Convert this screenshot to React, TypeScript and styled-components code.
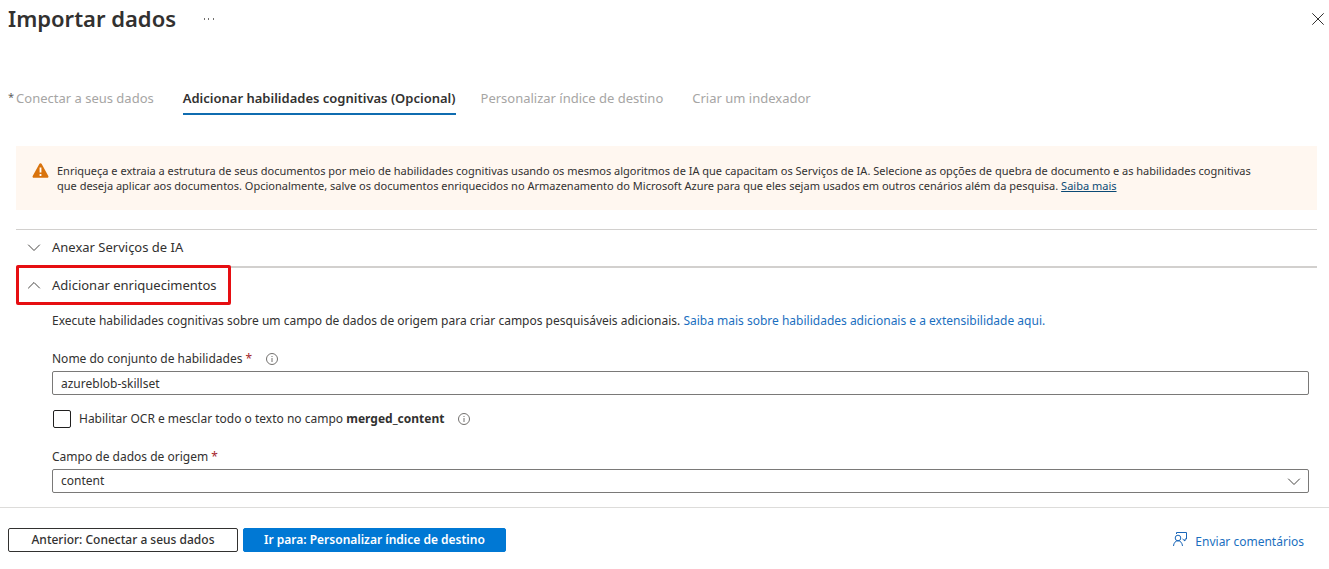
import React, { useState } from "react";
import styled, { createGlobalStyle } from "styled-components";

const GlobalStyle = createGlobalStyle`
  *, *::before, *::after { box-sizing: border-box; }
  body {
    margin: 0;
    background: #fff;
    color: #323130;
    font-family: "Segoe UI", "Noto Sans", sans-serif;
    font-size: 12px;
    line-height: 16px;
  }
  button, input, select { font: inherit; color: inherit; }
`;

const Header = styled.header`
  display: flex;
  align-items: center;
  height: 38px;
  padding: 0 4px 0 8px;
`;

const Title = styled.h1`
  margin: 0;
  padding-bottom: 2px;
  font-size: 22px;
  line-height: 28px;
  font-weight: 600;
`;

const IconButton = styled.button<{ $push?: boolean }>`
  display: grid;
  place-items: center;
  width: 14px;
  height: 14px;
  padding: 0;
  border: 0;
  background: none;
  margin-left: ${(p) => (p.$push ? "auto" : "26px")};
`;

const Tabs = styled.nav`
  display: flex;
  align-items: flex-start;
  padding: 50px 8px 0;
`;

const Tab = styled.button<{ $active?: boolean }>`
  padding: 0 0 5px;
  margin-right: ${(p) => (p.$active ? "25px" : "29px")};
  border: 0;
  border-bottom: 2px solid ${(p) => (p.$active ? "#0f6cb0" : "transparent")};
  background: none;
  color: ${(p) => (p.$active ? "#323130" : "#a6a5a4")};
  font-size: 13px;
  line-height: 20px;
  font-weight: ${(p) => (p.$active ? 600 : 400)};
  white-space: nowrap;
`;

const TabMark = styled.span`
  margin-right: 2px;
  color: #605e5c;
  font-size: 11px;
  line-height: 12px;
  vertical-align: 2px;
`;

const Body = styled.main`
  padding: 31px 12px 0 16px;
`;

const Banner = styled.div`
  display: flex;
  gap: 8px;
  min-height: 64px;
  padding: 17px 16px 16px;
  background: #fff7f0;
  font-size: 11px;
  line-height: 15px;
`;

const BannerText = styled.p`
  margin: 0;
`;

const DarkLink = styled.a`
  color: #0b4a75;
  text-decoration: underline;
`;

const Link = styled.a`
  color: #1a6fc0;
  text-decoration: none;
`;

const Accordion = styled.div`
  margin-top: 19px;
`;

const Section = styled.section<{ $thick?: boolean }>`
  border-top: ${(p) => (p.$thick ? 2 : 1)}px solid #d2d0ce;
`;

const SectionTitle = styled.h2`
  position: relative;
  margin: 0;
  font-size: 13px;
  line-height: 20px;
  font-weight: 400;
`;

const SectionToggle = styled.button`
  display: flex;
  align-items: center;
  gap: 11px;
  width: 100%;
  height: 36px;
  padding: 0 11px 2px;
  border: 0;
  background: none;
  text-align: left;
`;

const Highlight = styled.span`
  position: absolute;
  top: -3px;
  left: 0;
  width: 215px;
  height: 40px;
  border: 3px solid #e60e12;
  border-radius: 2px;
  pointer-events: none;
`;

const SectionBody = styled.div`
  padding: 9px 8px 14px 36px;
`;

const Intro = styled.p`
  margin: 0 0 22px;
`;

const Field = styled.div`
  display: flex;
  flex-direction: column;
  gap: 4px;
`;

const LabelRow = styled.div`
  display: flex;
  align-items: center;
  gap: 14px;
`;

const Required = styled.span`
  color: #a4262c;
`;

const TextInput = styled.input`
  width: 100%;
  height: 24px;
  padding: 0 8px;
  border: 1px solid #7a7978;
  border-radius: 2px;
  background: #fff;
`;

const SelectWrap = styled.div`
  display: grid;
  align-items: center;

  > * { grid-area: 1 / 1; }
  > svg {
    justify-self: end;
    margin-right: 8px;
    pointer-events: none;
  }
`;

const Select = styled.select`
  appearance: none;
  width: 100%;
  height: 24px;
  padding: 0 28px 0 8px;
  border: 1px solid #7a7978;
  border-radius: 2px;
  background: #fff;
`;

const CheckRow = styled.div`
  display: flex;
  align-items: center;
  gap: 14px;
  margin: 15px 0 21px;
`;

const CheckLabel = styled.label`
  display: flex;
  align-items: center;
  gap: 8px;
`;

const CheckBox = styled.input`
  appearance: none;
  width: 18px;
  height: 18px;
  margin: 0 0 0 1px;
  border: 1px solid #201f1e;
  border-radius: 2px;
  background: #fff;

  &:checked { background: #0078d4; }
`;

const Footer = styled.footer`
  display: flex;
  align-items: center;
  gap: 5px;
  padding: 20px 25px 17px 8px;
  border-top: 1px solid #dddcda;
`;

const Button = styled.button<{ $primary?: boolean }>`
  min-width: 230px;
  height: 24px;
  padding: 0 20px 1px;
  border: 1px solid ${(p) => (p.$primary ? "#0078d4" : "#323130")};
  border-radius: 2px;
  background: ${(p) => (p.$primary ? "#0078d4" : "#fff")};
  color: ${(p) => (p.$primary ? "#fff" : "#323130")};
  font-weight: ${(p) => (p.$primary ? 600 : 500)};
  white-space: nowrap;
`;

const Feedback = styled(Link)`
  display: flex;
  align-items: flex-start;
  gap: 8px;
  margin-left: auto;
  padding-top: 3px;
  line-height: 20px;
`;

function Chevron({ up }: { up?: boolean }) {
  return (
    <svg width="14" height="14" viewBox="0 0 14 14" fill="none" stroke="#484644" aria-hidden="true">
      <path d={up ? "M1.2 10.3 7 4.5l5.8 5.8" : "M1.2 4.7 7 10.5l5.8-5.8"} />
    </svg>
  );
}

function InfoIcon() {
  return (
    <svg width="12" height="12" viewBox="0 0 12 12" role="img" aria-label="Informações">
      <circle cx="6" cy="6" r="5.5" fill="none" stroke="#72706e" />
      <path d="M6 5v4M6 3v1" stroke="#72706e" />
    </svg>
  );
}

function WarningIcon() {
  return (
    <svg width="17" height="15" viewBox="0 0 17 15" aria-hidden="true">
      <path d="M8.5.2c.5 0 .9.3 1.2.7l6.6 12.1c.5.9-.1 1.8-1.1 1.8H1.8C.8 14.8.2 13.9.7 13L7.3.9C7.6.5 8 .2 8.5.2Z" fill="#d9730d" />
      <path d="M8.5 4.5v5M8.5 11v2" stroke="#fff" strokeWidth="1.8" />
    </svg>
  );
}

function FeedbackIcon() {
  return (
    <svg width="14" height="15" viewBox="0 0 14 15" fill="none" stroke="#1a66b8" aria-hidden="true">
      <path d="M3.5 2V.5h10V7H12v2L9.5 7" />
      <circle cx="5" cy="6" r="2.8" />
      <path d="M.5 14c.3-3.2 2-5.2 4.5-5.2s4.2 2 4.5 5.2" />
    </svg>
  );
}

export default function App() {
  const [name, setName] = useState("azureblob-skillset");
  const [ocr, setOcr] = useState(false);

  return (
    <>
      <GlobalStyle />
      <Header>
        <Title>Importar dados</Title>
        <IconButton type="button" aria-label="Mais opções">
          <svg width="12" height="2" viewBox="0 0 12 2" fill="#72706e">
            <path d="M1 0h1v2H1zM5 0h1v2H5zM10 0h1v2h-1z" />
          </svg>
        </IconButton>
        <IconButton type="button" $push aria-label="Fechar">
          <svg width="12" height="12" viewBox="0 0 12 12" stroke="#323130">
            <path d="m.3.3 11.4 11.4M11.7.3.3 11.7" />
          </svg>
        </IconButton>
      </Header>

      <Tabs>
        <Tab type="button"><TabMark>*</TabMark>Conectar a seus dados</Tab>
        <Tab type="button" $active>Adicionar habilidades cognitivas (Opcional)</Tab>
        <Tab type="button">Personalizar índice de destino</Tab>
        <Tab type="button">Criar um indexador</Tab>
      </Tabs>

      <Body>
        <Banner>
          <WarningIcon />
          <BannerText>
            Enriqueça e extraia a estrutura de seus documentos por meio de habilidades cognitivas usando os mesmos algoritmos de IA que capacitam os Serviços de IA. Selecione as opções de quebra de documento e as habilidades cognitivas
            <br />
            que deseja aplicar aos documentos. Opcionalmente, salve os documentos enriquecidos no Armazenamento do Microsoft Azure para que eles sejam usados em outros cenários além da pesquisa. <DarkLink href="#saiba-mais">Saiba mais</DarkLink>
          </BannerText>
        </Banner>

        <Accordion>
          <Section>
            <SectionTitle>
              <SectionToggle type="button" aria-expanded="false">
                <Chevron />
                Anexar Serviços de IA
              </SectionToggle>
            </SectionTitle>
          </Section>
          <Section $thick>
            <SectionTitle>
              <SectionToggle type="button" aria-expanded="true">
                <Chevron up />
                Adicionar enriquecimentos
              </SectionToggle>
              <Highlight />
            </SectionTitle>
            <SectionBody>
              <Intro>
                Execute habilidades cognitivas sobre um campo de dados de origem para criar campos pesquisáveis adicionais.{" "}
                <Link href="#extensibilidade">Saiba mais sobre habilidades adicionais e a extensibilidade aqui.</Link>
              </Intro>
              <Field>
                <LabelRow>
                  <label htmlFor="skillset">Nome do conjunto de habilidades <Required>*</Required></label>
                  <InfoIcon />
                </LabelRow>
                <TextInput id="skillset" value={name} onChange={(e) => setName(e.target.value)} />
              </Field>
              <CheckRow>
                <CheckLabel htmlFor="ocr">
                  <CheckBox id="ocr" type="checkbox" checked={ocr} onChange={(e) => setOcr(e.target.checked)} />
                  <span>Habilitar OCR e mesclar todo o texto no campo <b>merged_content</b></span>
                </CheckLabel>
                <InfoIcon />
              </CheckRow>
              <Field>
                <label htmlFor="source">Campo de dados de origem <Required>*</Required></label>
                <SelectWrap>
                  <Select id="source" defaultValue="content">
                    <option value="content">content</option>
                  </Select>
                  <Chevron />
                </SelectWrap>
              </Field>
            </SectionBody>
          </Section>
        </Accordion>
      </Body>

      <Footer>
        <Button type="button">Anterior: Conectar a seus dados</Button>
        <Button type="button" $primary>Ir para: Personalizar índice de destino</Button>
        <Feedback href="#comentarios"><FeedbackIcon />Enviar comentários</Feedback>
      </Footer>
    </>
  );
}
